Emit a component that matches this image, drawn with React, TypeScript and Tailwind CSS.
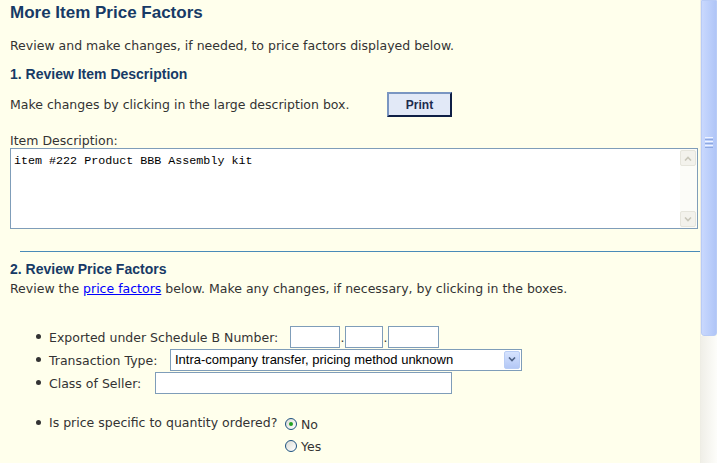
import React from 'react';

const body = "font-['DejaVu_Sans',Verdana,sans-serif] text-[12.5px] text-[#333333]";
const heading = "font-['Liberation_Sans',Arial,sans-serif] font-bold text-[#173a66]";

const Bullet = () => <span className="mr-[8px] inline-block h-[5px] w-[5px] shrink-0 rounded-full bg-[#333333]" />;

const Radio = ({ checked }: { checked?: boolean }) => (
  <span className="flex h-[12px] w-[12px] items-center justify-center rounded-full border border-[#1c5180] bg-gradient-to-br from-[#dcdcd6] to-white">
    {checked && <span className="h-[4px] w-[4px] rounded-full bg-[#21a121]" />}
  </span>
);

const Chevron = ({ up, color }: { up?: boolean; color: string }) => (
  <svg width="8" height="5" viewBox="0 0 8 5">
    <path d={up ? 'M1 4.5 L4 1.5 L7 4.5' : 'M1 0.5 L4 3.5 L7 0.5'} fill="none" stroke={color} strokeWidth="1.6" />
  </svg>
);

const App = () => {
  return (
    <div className="flex h-[463px] w-[717px] overflow-hidden bg-[#ffffec]">
      <div className={`flex w-[700px] flex-col ${body}`}>
        <h1 className={`${heading} ml-[10px] mt-[3px] h-[20px] text-[17px] leading-[20px]`}>More Item Price Factors</h1>
        <p className="ml-[10px] mt-[16px] leading-[14px]">Review and make changes, if needed, to price factors displayed below.</p>
        <h2 className={`${heading} ml-[10px] mt-[14px] text-[14px] leading-[14px]`}>1. Review Item Description</h2>

        <div className="mt-[11px] flex items-end">
          <p className="ml-[10px] mb-[5px] w-[377px] leading-[14px]">Make changes by clicking in the large description box.</p>
          <button className="h-[25px] w-[65px] border-[2px] border-b-[#0f1f45] border-l-[#7a96c2] border-r-[#0f1f45] border-t-[#7a96c2] bg-[#e2e9f7] font-['Liberation_Sans',Arial,sans-serif] text-[12px] font-bold text-[#1d2b4f]">
            Print
          </button>
        </div>

        <p className="ml-[10px] mt-[17px] leading-[14px]">Item Description:</p>
        <div className="ml-[10px] flex h-[81px] w-[688px] border border-[#7f9db9] bg-white">
          <div className="flex-1 px-[3px] pt-[5px] font-['Liberation_Mono','Courier_New',monospace] text-[11.7px] leading-[14px] text-black">
            item #222 Product BBB Assembly kit
          </div>
          <div className="flex w-[17px] flex-col justify-between bg-[#fcfcf8] py-[1px] pr-[1px]">
            <div className="flex h-[16px] items-center justify-center rounded-[2px] border border-[#e6e5dc] bg-[#f3f2ec]">
              <Chevron up color="#c9c7ba" />
            </div>
            <div className="flex h-[16px] items-center justify-center rounded-[2px] border border-[#e6e5dc] bg-[#f3f2ec]">
              <Chevron color="#c9c7ba" />
            </div>
          </div>
        </div>

        <div className="ml-[20px] mt-[22px] h-px w-[680px] bg-[#4a8bb8]" />
        <h2 className={`${heading} ml-[10px] mt-[10px] text-[14px] leading-[14px]`}>2. Review Price Factors</h2>
        <p className="ml-[10px] mt-[6px] leading-[14px]">
          Review the <a className="text-[#0000ff] underline">price factors</a> below. Make any changes, if necessary, by clicking in the boxes.
        </p>

        <ul className="mt-[29px] flex flex-col">
          <li className="flex h-[23px] items-center pl-[36px]">
            <Bullet />
            <span className="w-[241px] pt-[4px]">Exported under Schedule B Number:</span>
            <span className="h-[22px] w-[50px] border border-[#7f9db9] bg-white" />
            <span className="flex h-[22px] w-[5px] items-end justify-center pb-[3px] leading-none">.</span>
            <span className="h-[22px] w-[38px] border border-[#7f9db9] bg-white" />
            <span className="flex h-[22px] w-[5px] items-end justify-center pb-[3px] leading-none">.</span>
            <span className="h-[22px] w-[51px] border border-[#7f9db9] bg-white" />
          </li>
          <li className="flex h-[23px] items-center pl-[36px]">
            <Bullet />
            <span className="w-[121px] pt-[4px]">Transaction Type:</span>
            <div className="flex h-[22px] w-[352px] items-center border border-[#7f9db9] bg-white pl-[4px] pr-[1px]">
              <span className="flex-1 font-['Liberation_Sans',Arial,sans-serif] text-[13px] text-black">Intra-company transfer, pricing method unknown</span>
              <span className="flex h-[18px] w-[16px] items-center justify-center rounded-[2px] border border-[#b9cdf5] bg-gradient-to-b from-[#d6e3fe] to-[#b4c8f6]">
                <Chevron color="#4d6185" />
              </span>
            </div>
          </li>
          <li className="flex h-[23px] items-center pl-[36px]">
            <Bullet />
            <span className="w-[106px] pt-[4px]">Class of Seller:</span>
            <span className="h-[22px] w-[297px] border border-[#7f9db9] bg-white" />
          </li>
          <li className="mt-[20px] flex items-start pl-[36px]">
            <span className="mt-[6px] flex"><Bullet /></span>
            <span className="mt-[2px] w-[236px] leading-[14px]">Is price specific to quantity ordered?</span>
            <div className="flex flex-col gap-[8px] pt-[2px]">
              <label className="flex items-center gap-[4px] leading-[12px]">
                <Radio checked />
                <span className="pt-[3px]">No</span>
              </label>
              <label className="flex items-center gap-[4px] leading-[12px]">
                <Radio />
                <span className="pt-[2px]">Yes</span>
              </label>
            </div>
          </li>
        </ul>
      </div>

      <div className="flex w-[17px] flex-col border-l border-[#eeede5]">
        <div className="flex h-[336px] items-center justify-center rounded-b-[3px] border border-[#b8cbf6] bg-gradient-to-r from-[#c9d8fd] via-[#bccffb] to-[#b0c5f7]">
          <div className="flex -translate-y-[26px] flex-col gap-[1px]">
            <span className="h-px w-[8px] bg-[#eef3ff]" />
            <span className="h-px w-[8px] bg-[#8ea8e0]" />
            <span className="h-px w-[8px] bg-[#eef3ff]" />
            <span className="h-px w-[8px] bg-[#8ea8e0]" />
            <span className="h-px w-[8px] bg-[#eef3ff]" />
            <span className="h-px w-[8px] bg-[#8ea8e0]" />
          </div>
        </div>
        <div className="flex-1 bg-gradient-to-r from-[#f0efe8] to-[#fdfdfa]" />
      </div>
    </div>
  );
};

export default App;
